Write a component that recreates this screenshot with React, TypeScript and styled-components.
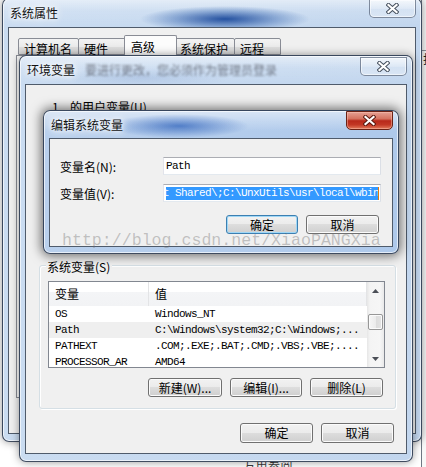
import React from 'react';
import styled, { createGlobalStyle } from 'styled-components';

const ui = `"Noto Sans CJK SC", "Liberation Sans", sans-serif`;
const mono = `"Liberation Mono", "DejaVu Sans Mono", monospace`;

const GlobalStyle = createGlobalStyle`
  html, body { margin: 0; padding: 0; background: #ffffff; }
  body { font-family: ${ui}; font-size: 12px; color: #000; overflow: hidden; }
  * { box-sizing: border-box; }
`;

const Desktop = styled.div`
  position: relative;
  width: 426px;
  height: 467px;
  overflow: hidden;
  background: #ffffff;
`;

const BehindPanel = styled.div`
  position: absolute;
  left: 421px;
  top: 0;
  width: 12px;
  height: 467px;
  border-left: 1px solid #6f7784;
  background: #f8f8f8;
  display: flex;
  flex-direction: column;
`;

const BehindTab = styled.div`
  margin-top: 50px;
  border-top: 1px solid #8a8f98;
  padding-left: 1px;
  font-size: 12px;
  line-height: 16px;
  color: #222;
  white-space: nowrap;
`;

const BackText = styled.div`
  position: absolute;
  left: 243px;
  top: 459px;
  font-size: 12px;
  line-height: 14px;
  color: #3a3a3a;
  letter-spacing: 0.5px;
`;

type WinProps = {
  $x: number;
  $y: number;
  $w: number;
  $h: number;
  $z: number;
  $pb: number;
  $active?: boolean;
  $glass: string;
};

const Win = styled.div<WinProps>`
  position: absolute;
  left: ${(p) => p.$x}px;
  top: ${(p) => p.$y}px;
  width: ${(p) => p.$w}px;
  height: ${(p) => p.$h}px;
  z-index: ${(p) => p.$z};
  display: flex;
  flex-direction: column;
  padding: 0 5px ${(p) => p.$pb}px 5px;
  border: 1px solid rgba(24, 36, 58, 0.8);
  border-radius: 7px;
  background: ${(p) => p.$glass};
  box-shadow: ${(p) =>
      p.$active ? '0 0 11px 2px rgba(0,0,0,0.55)' : '0 0 9px rgba(0,0,0,0.42)'},
    inset 0 0 0 1px rgba(255, 255, 255, 0.65);
`;

const TitleBar = styled.div<{ $h: number }>`
  height: ${(p) => p.$h}px;
  flex-shrink: 0;
  display: flex;
  align-items: center;
`;

const TitleText = styled.span`
  margin-left: 2px;
  font-size: 12px;
  line-height: 14px;
  color: #111;
  white-space: nowrap;
  text-shadow: 0 0 4px #fff, 0 0 8px rgba(255, 255, 255, 0.95), 0 0 12px rgba(255, 255, 255, 0.8);
`;

const BlurredText = styled.span`
  margin-left: 10px;
  font-size: 12px;
  line-height: 14px;
  color: rgba(40, 40, 50, 0.55);
  white-space: nowrap;
  filter: blur(1.3px);
`;

const CloseBtn = styled.div<{ $red?: boolean; $top: number }>`
  margin-left: auto;
  align-self: flex-start;
  margin-top: ${(p) => p.$top}px;
  width: 47px;
  height: 19px;
  flex-shrink: 0;
  display: flex;
  align-items: center;
  justify-content: center;
  border: 1px solid ${(p) => (p.$red ? '#6b2215' : 'rgba(55,70,95,0.6)')};
  border-radius: 0 0 5px 5px;
  background: ${(p) =>
    p.$red
      ? 'linear-gradient(#e5a194 0%, #d5725f 40%, #b8291a 52%, #c23724 75%, #e27b5c 100%)'
      : 'linear-gradient(rgba(255,255,255,0.6) 0%, rgba(255,255,255,0.3) 50%, rgba(255,255,255,0.15) 51%, rgba(255,255,255,0.35) 100%)'};
  box-shadow: inset 0 0 0 1px ${(p) => (p.$red ? 'rgba(255,200,185,0.45)' : 'rgba(255,255,255,0.55)')};
`;

const CloseGlyph = ({ dark }: { dark: string }) => (
  <svg width="13" height="11" viewBox="0 0 13 11">
    <path d="M2.5 2 L10.5 9 M10.5 2 L2.5 9" stroke={dark} strokeWidth="4.2" strokeLinecap="square" fill="none" />
    <path d="M2.5 2 L10.5 9 M10.5 2 L2.5 9" stroke="#ffffff" strokeWidth="2.2" strokeLinecap="square" fill="none" />
  </svg>
);

const Client = styled.div`
  flex: 1;
  min-height: 0;
  display: flex;
  flex-direction: column;
  border: 1px solid #4f5b6b;
  background: #f0f0f0;
  overflow: hidden;
`;

/* ---------- System properties (window 1) ---------- */

const TabStrip = styled.div`
  display: flex;
  align-items: flex-end;
  height: 20px;
  margin-top: 7px;
  padding-left: 9px;
  flex-shrink: 0;
  position: relative;
  z-index: 1;
`;

const Tab = styled.div<{ $w: number; $ml: number; $sel?: boolean }>`
  width: ${(p) => p.$w}px;
  height: ${(p) => (p.$sel ? 21 : 17)}px;
  margin-left: ${(p) => p.$ml}px;
  margin-bottom: ${(p) => (p.$sel ? -1 : 0)}px;
  padding: ${(p) => (p.$sel ? '3px 0 0 6px' : '2px 0 0 5px')};
  position: relative;
  z-index: ${(p) => (p.$sel ? 2 : 1)};
  border: 1px solid #898c95;
  border-bottom: ${(p) => (p.$sel ? 'none' : '1px solid #898c95')};
  border-radius: 2px 2px 0 0;
  background: ${(p) => (p.$sel ? '#fcfcfc' : 'linear-gradient(#f3f3f3 0%, #ebebeb 50%, #dedede 51%, #d5d5d5 100%)')};
  font-size: 12px;
  line-height: 15px;
  white-space: nowrap;
  color: #000;
`;

const TabPanel = styled.div`
  flex: 1;
  margin: 0 7px 35px 7px;
  border: 1px solid #898c95;
  background: #fcfcfc;
`;

/* ---------- Environment variables (window 2) ---------- */

const UserCaption = styled.div`
  margin: 14px 0 0 26px;
  font-size: 12px;
  line-height: 15px;
  white-space: pre;
  flex-shrink: 0;
`;

const Group = styled.div`
  margin: 151px 10px 0 13px;
  border: 1px solid #d5dfe5;
  border-radius: 3px;
  box-shadow: inset 1px 1px 0 #ffffff, 1px 1px 0 #ffffff;
  padding: 0 10px 11px 8px;
  display: flex;
  flex-direction: column;
  flex-shrink: 0;
`;

const Legend = styled.div`
  align-self: flex-start;
  margin: -7px 0 0 -2px;
  padding: 0 2px 0 1px;
  background: #f0f0f0;
  font-size: 12px;
  line-height: 15px;
`;

const ListView = styled.div`
  margin-top: 7px;
  height: 87px;
  display: flex;
  border: 1px solid #828790;
  background: #ffffff;
  overflow: hidden;
`;

const ListMain = styled.div`
  flex: 1;
  min-width: 0;
  display: flex;
  flex-direction: column;
`;

const ListHeader = styled.div`
  height: 24px;
  flex-shrink: 0;
  display: flex;
  background: linear-gradient(#ffffff 0%, #ffffff 40%, #f4f5f7 41%, #f2f3f5 100%);
  border-right: 1px solid #e3e4e6;
`;

const HeaderCell = styled.div<{ $w?: number }>`
  ${(p) => (p.$w ? `width: ${p.$w}px; border-right: 1px solid #e3e4e6;` : 'flex: 1;')}
  flex-shrink: 0;
  padding-left: 6px;
  font-size: 12px;
  line-height: 24px;
  color: #000;
`;

const Row = styled.div<{ $sel?: boolean }>`
  height: 16px;
  flex-shrink: 0;
  display: flex;
  background: ${(p) => (p.$sel ? '#efefef' : 'transparent')};
`;

const Cell = styled.div<{ $w?: number }>`
  ${(p) => (p.$w ? `width: ${p.$w}px;` : 'flex: 1; min-width: 0;')}
  flex-shrink: 0;
  padding-left: 6px;
  font-family: ${mono};
  font-size: 11px;
  letter-spacing: -0.6px;
  line-height: 16px;
  white-space: nowrap;
  overflow: hidden;
  color: #000;
`;

const ScrollBar = styled.div`
  width: 17px;
  flex-shrink: 0;
  display: flex;
  flex-direction: column;
  background: linear-gradient(to right, #e6e6e6 0px, #f4f4f4 3px, #f6f6f6 13px, #e9e9e9 17px);
`;

const ScrollArrow = styled.div`
  height: 17px;
  flex-shrink: 0;
  display: flex;
  align-items: center;
  justify-content: center;
`;

const ScrollTrack = styled.div`
  flex: 1;
  display: flex;
  flex-direction: column;
`;

const Thumb = styled.div`
  margin: 15px 1px 0 1px;
  height: 16px;
  border: 1px solid #979797;
  border-radius: 2px;
  background: linear-gradient(to right, #f6f6f6 0%, #ececec 50%, #dcdcdc 51%, #e4e4e4 100%);
  box-shadow: inset 0 0 0 1px #fbfbfb;
`;

const Arrow = ({ down }: { down?: boolean }) => (
  <svg width="7" height="4" viewBox="0 0 7 4">
    <path d={down ? 'M0 0H7L3.5 4Z' : 'M0 4H7L3.5 0Z'} fill="#4b4f57" />
  </svg>
);

const ButtonRow = styled.div<{ $mt: number; $mr: number }>`
  display: flex;
  justify-content: flex-end;
  gap: 8px;
  margin-top: ${(p) => p.$mt}px;
  margin-right: ${(p) => p.$mr}px;
  flex-shrink: 0;
`;

const Button = styled.button<{ $w: number; $h?: number; $default?: boolean }>`
  width: ${(p) => p.$w}px;
  height: ${(p) => p.$h ?? 19}px;
  flex-shrink: 0;
  padding: 0;
  margin: 0;
  display: flex;
  align-items: center;
  justify-content: center;
  border: 1px solid ${(p) => (p.$default ? '#3c7fb1' : '#707070')};
  border-radius: 3px;
  background: linear-gradient(#f2f2f2 0%, #ebebeb 49%, #dddddd 50%, #cfcfcf 100%);
  box-shadow: inset 0 0 0 1px ${(p) => (p.$default ? '#9fd7f6' : '#fbfbfb')};
  font-family: ${ui};
  font-size: 12px;
  line-height: 14px;
  color: #000;
  white-space: nowrap;
`;

/* ---------- Edit system variable (window 3) ---------- */

const Form = styled.div`
  display: grid;
  grid-template-columns: 103px 218px;
  row-gap: 9px;
  align-items: center;
  padding: 18px 0 0 10px;
  flex-shrink: 0;
`;

const FieldLabel = styled.div`
  font-size: 12px;
  line-height: 15px;
  white-space: nowrap;
`;

const TextBox = styled.div`
  height: 18px;
  display: flex;
  align-items: center;
  padding: 0 1px 0 2px;
  border: 1px solid;
  border-color: #abadb3 #dbdfe6 #e3e9ef #e2e3ea;
  background: #ffffff;
  overflow: hidden;
  font-family: ${mono};
  font-size: 11px;
  letter-spacing: -0.6px;
  line-height: 13px;
  white-space: pre;
`;

const Clip = styled.div`
  flex: 1;
  min-width: 0;
  display: flex;
  justify-content: flex-end;
  overflow: hidden;
`;

const Selection = styled.span`
  flex-shrink: 0;
  background: #3399ff;
  color: #ffffff;
  line-height: 13px;
  white-space: pre;
`;

const Caret = styled.span`
  flex-shrink: 0;
  width: 1px;
  height: 13px;
  margin-left: -1px;
  background: #e07a10;
`;

const Watermark = styled.div`
  position: absolute;
  left: 62px;
  top: 233px;
  z-index: 10;
  pointer-events: none;
  font-family: ${mono};
  font-size: 16.6px;
  line-height: 16.6px;
  color: rgba(110, 110, 110, 0.38);
  white-space: nowrap;
`;

const inactiveBase =
  'linear-gradient(to bottom, rgba(255,255,255,0.55) 0px, rgba(255,255,255,0.15) 12px, rgba(255,255,255,0) 26px), linear-gradient(to right, #cadcf1, #c2d6ee)';

const glassW1 = `radial-gradient(ellipse 85px 13px at 222px 20px, rgba(28,74,156,0.95), rgba(40,90,170,0.4) 60%, rgba(40,90,170,0) 100%), ${inactiveBase}`;
const glassW2 = `radial-gradient(ellipse 90px 10px at 120px 22px, rgba(120,150,200,0.25), rgba(120,150,200,0) 100%), ${inactiveBase}`;
const glassW3 =
  'radial-gradient(ellipse 70px 12px at 135px 15px, rgba(55,105,190,0.8), rgba(55,105,190,0) 100%), linear-gradient(to bottom, rgba(255,255,255,0.5) 0px, rgba(255,255,255,0) 20px), linear-gradient(to right, #b9d0ed, #aec9eb)';

const tabs = [
  { label: '计算机名', w: 61, ml: 0 },
  { label: '硬件', w: 48, ml: -1 },
  { label: '高级', w: 53, ml: -2, sel: true },
  { label: '系统保护', w: 61, ml: -3 },
  { label: '远程', w: 47, ml: -1 },
];

const rows = [
  { name: 'OS', value: 'Windows_NT' },
  { name: 'Path', value: 'C:\\Windows\\system32;C:\\Windows;...', sel: true },
  { name: 'PATHEXT', value: '.COM;.EXE;.BAT;.CMD;.VBS;.VBE;....' },
  { name: 'PROCESSOR_AR', value: 'AMD64' },
];

export default function App() {
  return (
    <>
      <GlobalStyle />
      <Desktop>
        <BehindPanel>
          <BehindTab>护</BehindTab>
        </BehindPanel>
        <BackText>万用参阅</BackText>

        <Win $x={2} $y={-2} $w={420} $h={444} $z={1} $pb={7} $glass={glassW1}>
          <TitleBar $h={28}>
            <TitleText>系统属性</TitleText>
            <CloseBtn $top={0}>
              <CloseGlyph dark="#46505e" />
            </CloseBtn>
          </TitleBar>
          <Client>
            <TabStrip>
              {tabs.map((t) => (
                <Tab key={t.label} $w={t.w} $ml={t.ml} $sel={t.sel}>
                  {t.label}
                </Tab>
              ))}
            </TabStrip>
            <TabPanel />
          </Client>
        </Win>

        <Win $x={19} $y={55} $w={394} $h={407} $z={2} $pb={7} $glass={glassW2}>
          <TitleBar $h={28}>
            <TitleText>环境变量</TitleText>
            <BlurredText>要进行更改，您必须作为管理员登录</BlurredText>
            <CloseBtn $top={1}>
              <CloseGlyph dark="#46505e" />
            </CloseBtn>
          </TitleBar>
          <Client>
            <UserCaption>{'1 .  的用户变量(U)'}</UserCaption>
            <Group>
              <Legend>系统变量(S)</Legend>
              <ListView>
                <ListMain>
                  <ListHeader>
                    <HeaderCell $w={100}>变量</HeaderCell>
                    <HeaderCell>值</HeaderCell>
                  </ListHeader>
                  {rows.map((r) => (
                    <Row key={r.name} $sel={r.sel}>
                      <Cell $w={100}>{r.name}</Cell>
                      <Cell>{r.value}</Cell>
                    </Row>
                  ))}
                </ListMain>
                <ScrollBar>
                  <ScrollArrow>
                    <Arrow />
                  </ScrollArrow>
                  <ScrollTrack>
                    <Thumb />
                  </ScrollTrack>
                  <ScrollArrow>
                    <Arrow down />
                  </ScrollArrow>
                </ScrollBar>
              </ListView>
              <ButtonRow $mt={10} $mr={2}>
                <Button $w={74}>新建(W)...</Button>
                <Button $w={72}>编辑(I)...</Button>
                <Button $w={73}>删除(L)</Button>
              </ButtonRow>
            </Group>
            <ButtonRow $mt={14} $mr={12}>
              <Button $w={73} $h={20}>确定</Button>
              <Button $w={73} $h={20}>取消</Button>
            </ButtonRow>
          </Client>
        </Win>

        <Win $x={43} $y={110} $w={356} $h={144} $z={3} $pb={6} $active $glass={glassW3}>
          <TitleBar $h={27}>
            <TitleText>编辑系统变量</TitleText>
            <CloseBtn $red $top={0}>
              <CloseGlyph dark="#5a1a10" />
            </CloseBtn>
          </TitleBar>
          <Client>
            <Form>
              <FieldLabel>变量名(N):</FieldLabel>
              <TextBox>Path</TextBox>
              <FieldLabel>变量值(V):</FieldLabel>
              <TextBox>
                <Clip>
                  <Selection>{'t Shared\\;C:\\UnxUtils\\usr\\local\\wbin'}</Selection>
                  <Caret />
                </Clip>
              </TextBox>
            </Form>
            <ButtonRow $mt={13} $mr={13}>
              <Button $w={72} $default>确定</Button>
              <Button $w={73}>取消</Button>
            </ButtonRow>
          </Client>
        </Win>

        <Watermark>http://blog.csdn.net/XiaoPANGXia</Watermark>
      </Desktop>
    </>
  );
}
